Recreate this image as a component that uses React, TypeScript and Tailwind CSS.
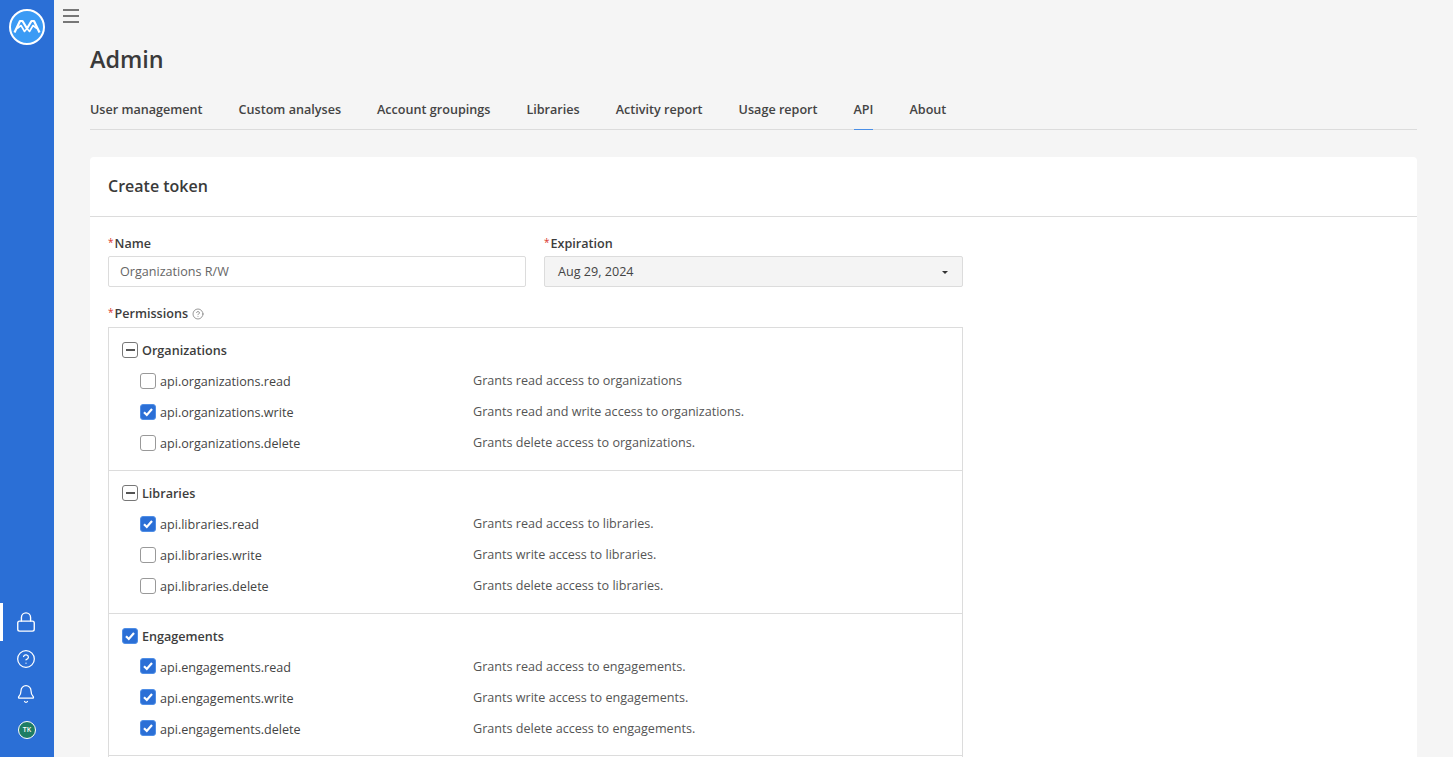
import { Bell, CircleHelp, Lock } from "lucide-react";

const tabs = [
  "User management",
  "Custom analyses",
  "Account groupings",
  "Libraries",
  "Activity report",
  "Usage report",
  "API",
  "About",
];

type Perm = { name: string; desc: string; checked: boolean };

const groups: { title: string; state: "mixed" | "all"; perms: Perm[] }[] = [
  {
    title: "Organizations",
    state: "mixed",
    perms: [
      { name: "api.organizations.read", desc: "Grants read access to organizations", checked: false },
      { name: "api.organizations.write", desc: "Grants read and write access to organizations.", checked: true },
      { name: "api.organizations.delete", desc: "Grants delete access to organizations.", checked: false },
    ],
  },
  {
    title: "Libraries",
    state: "mixed",
    perms: [
      { name: "api.libraries.read", desc: "Grants read access to libraries.", checked: true },
      { name: "api.libraries.write", desc: "Grants write access to libraries.", checked: false },
      { name: "api.libraries.delete", desc: "Grants delete access to libraries.", checked: false },
    ],
  },
  {
    title: "Engagements",
    state: "all",
    perms: [
      { name: "api.engagements.read", desc: "Grants read access to engagements.", checked: true },
      { name: "api.engagements.write", desc: "Grants write access to engagements.", checked: true },
      { name: "api.engagements.delete", desc: "Grants delete access to engagements.", checked: true },
    ],
  },
];

function Checkbox({ state }: { state: "off" | "on" | "mixed" }) {
  if (state === "on") {
    return (
      <span className="mb-[2px] flex h-[16px] w-[16px] shrink-0 items-center justify-center rounded-[3px] border border-[#4f8ee6] bg-[#2b6fd6]">
        <svg width="12" height="12" viewBox="0 0 12 12" fill="none" stroke="white" strokeWidth="2.2">
          <path d="M2 6.2 4.8 9 10 3" />
        </svg>
      </span>
    );
  }
  if (state === "mixed") {
    return (
      <span className="mb-[2px] flex h-[16px] w-[16px] shrink-0 items-center justify-center rounded-[3px] border border-[#777] bg-white">
        <span className="h-[2px] w-[9px] bg-[#555]" />
      </span>
    );
  }
  return <span className="mb-[2px] h-[16px] w-[16px] shrink-0 rounded-[3px] border border-[#999] bg-white" />;
}

function Label({ children }: { children: string }) {
  return (
    <div className="flex h-[18px] items-center text-[12.6px] font-[550] text-[#3d3d3d]">
      <span className="mr-[1px] -mt-[4px] text-[10px] font-normal text-[#d9342b]">*</span>
      {children}
    </div>
  );
}

function Logo() {
  return (
    <svg width="36" height="36" viewBox="0 0 36 36" fill="none">
      <circle cx="18" cy="18" r="17" fill="#3b9bf5" stroke="white" strokeWidth="2" />
      <path d="M5.5 23.5 11 12 13.5 12 18 19.5 22.5 12 25 12 30.5 23.5" stroke="white" strokeWidth="2.2" strokeLinejoin="round" />
      <path d="M8 19.5 12 16.5 15.5 22.5 18 19.5 20.5 22.5 24 16.5 28 19.5" stroke="white" strokeWidth="1.6" strokeLinejoin="round" />
    </svg>
  );
}

export default function App() {
  return (
    <div className="flex h-[757px] w-full overflow-hidden bg-[#f5f5f5] font-['Open_Sans',sans-serif] text-[#333]">
      <aside className="flex w-[54px] shrink-0 flex-col items-center bg-[#2b6fd6] pt-[9px] pb-[9px]">
        <Logo />
        <div className="mt-auto flex w-full flex-col items-center">
          <div className="relative flex h-[38px] w-full items-center justify-center">
            <span className="absolute left-0 top-0 h-full w-[3px] bg-white" />
            <Lock size={22} color="white" strokeWidth={1.5} className="-translate-x-[1px]" />
          </div>
          <div className="flex h-[35px] items-center justify-center">
            <CircleHelp size={20} color="white" strokeWidth={1.5} className="-translate-x-[1px]" />
          </div>
          <div className="flex h-[36px] items-center justify-center">
            <Bell size={20} color="white" strokeWidth={1.5} className="-translate-x-[1px]" />
          </div>
          <div className="flex h-[36px] items-center justify-center">
            <span className="flex h-[18px] w-[18px] items-center justify-center rounded-full border border-white bg-[#1e7d64] text-[7px] font-semibold text-white">
              TK
            </span>
          </div>
        </div>
      </aside>

      <div className="min-w-0 flex-1">
        <div className="flex h-[30px] items-start pl-[9px] pt-[9px]">
          <div className="flex w-[16px] flex-col gap-[4.5px]">
            <span className="h-[1.5px] bg-[#777]" />
            <span className="h-[1.5px] bg-[#777]" />
            <span className="h-[1.5px] bg-[#777]" />
          </div>
        </div>
        <main className="pl-[36px] pr-[36px]">
          <h1 className="pt-[10px] text-[23.4px] font-[550] leading-[38px] text-[#3a3a3a]">Admin</h1>
          <nav className="mt-[21px] flex h-[31px] gap-[36px] border-b border-[#dcdcdc] pt-[2px] text-[12.6px] font-[550] text-[#444]">
            {tabs.map((t) => (
              <div key={t} className="relative leading-[18px]">
                {t}
                {t === "API" && <span className="absolute -bottom-[1px] left-0 h-px w-full bg-[#4a8fe7]" />}
              </div>
            ))}
          </nav>
          <section className="mt-[27px] rounded-[4px] bg-white">
            <h2 className="flex h-[60px] items-center border-b border-[#dcdcdc] px-[18px] pb-[2px] text-[16px] font-[550] text-[#3a3a3a]">
              Create token
            </h2>
            <div className="w-[873px] pl-[18px] pt-[18px]">
              <div className="flex gap-[18px]">
                <div className="w-[418px]">
                  <Label>Name</Label>
                  <div className="mt-[3px] flex h-[31px] items-center rounded-[2px] border border-[#dcdcdc] bg-white px-[11px] pt-[2px] text-[12.6px] text-[#666]">
                    Organizations R/W
                  </div>
                </div>
                <div className="w-[419px]">
                  <Label>Expiration</Label>
                  <div className="mt-[3px] flex h-[31px] items-center justify-between rounded-[2px] border border-[#dcdcdc] bg-[#f4f4f4] pl-[13px] pr-[14px] pt-[2px] text-[12.6px] text-[#444]">
                    Aug 29, 2024
                    <span className="h-0 w-0 border-x-[3px] border-t-[3px] border-x-transparent border-t-[#333]" />
                  </div>
                </div>
              </div>
              <div className="mt-[18px] flex items-center">
                <Label>Permissions</Label>
                <CircleHelp size={12} color="#777" strokeWidth={1.5} className="ml-[4px]" />
              </div>
              <div className="mt-[4px] w-[855px] border border-[#dcdcdc]">
                {groups.map((g) => (
                  <div
                    key={g.title}
                    className={
                      g.state === "all"
                        ? "h-[142px] border-b border-[#dcdcdc] pl-[13px] pt-[14px]"
                        : "h-[143px] border-b border-[#dcdcdc] pl-[13px] pt-[14px]"
                    }
                  >
                    <div className="flex h-[18px] items-center gap-[4px] text-[12.6px] font-[550] text-[#3d3d3d]">
                      <Checkbox state={g.state === "all" ? "on" : "mixed"} />
                      {g.title}
                    </div>
                    <div className="mt-[7px] flex flex-col">
                      {g.perms.map((p) => (
                        <div
                          key={p.name}
                          className={
                            g.state === "all"
                              ? "flex h-[30.8px] items-center text-[12.6px] text-[#444]"
                              : "flex h-[31px] items-center text-[12.6px] text-[#444]"
                          }
                        >
                          <div className="flex w-[351px] items-center gap-[4px] pl-[18px]">
                            <span className="mb-[2px] flex">
                              <Checkbox state={p.checked ? "on" : "off"} />
                            </span>
                            {p.name}
                          </div>
                          <span className="mb-[2px] text-[#555]">{p.desc}</span>
                        </div>
                      ))}
                    </div>
                  </div>
                ))}
                <div className="h-[40px]" />
              </div>
            </div>
          </section>
        </main>
      </div>
    </div>
  );
}
